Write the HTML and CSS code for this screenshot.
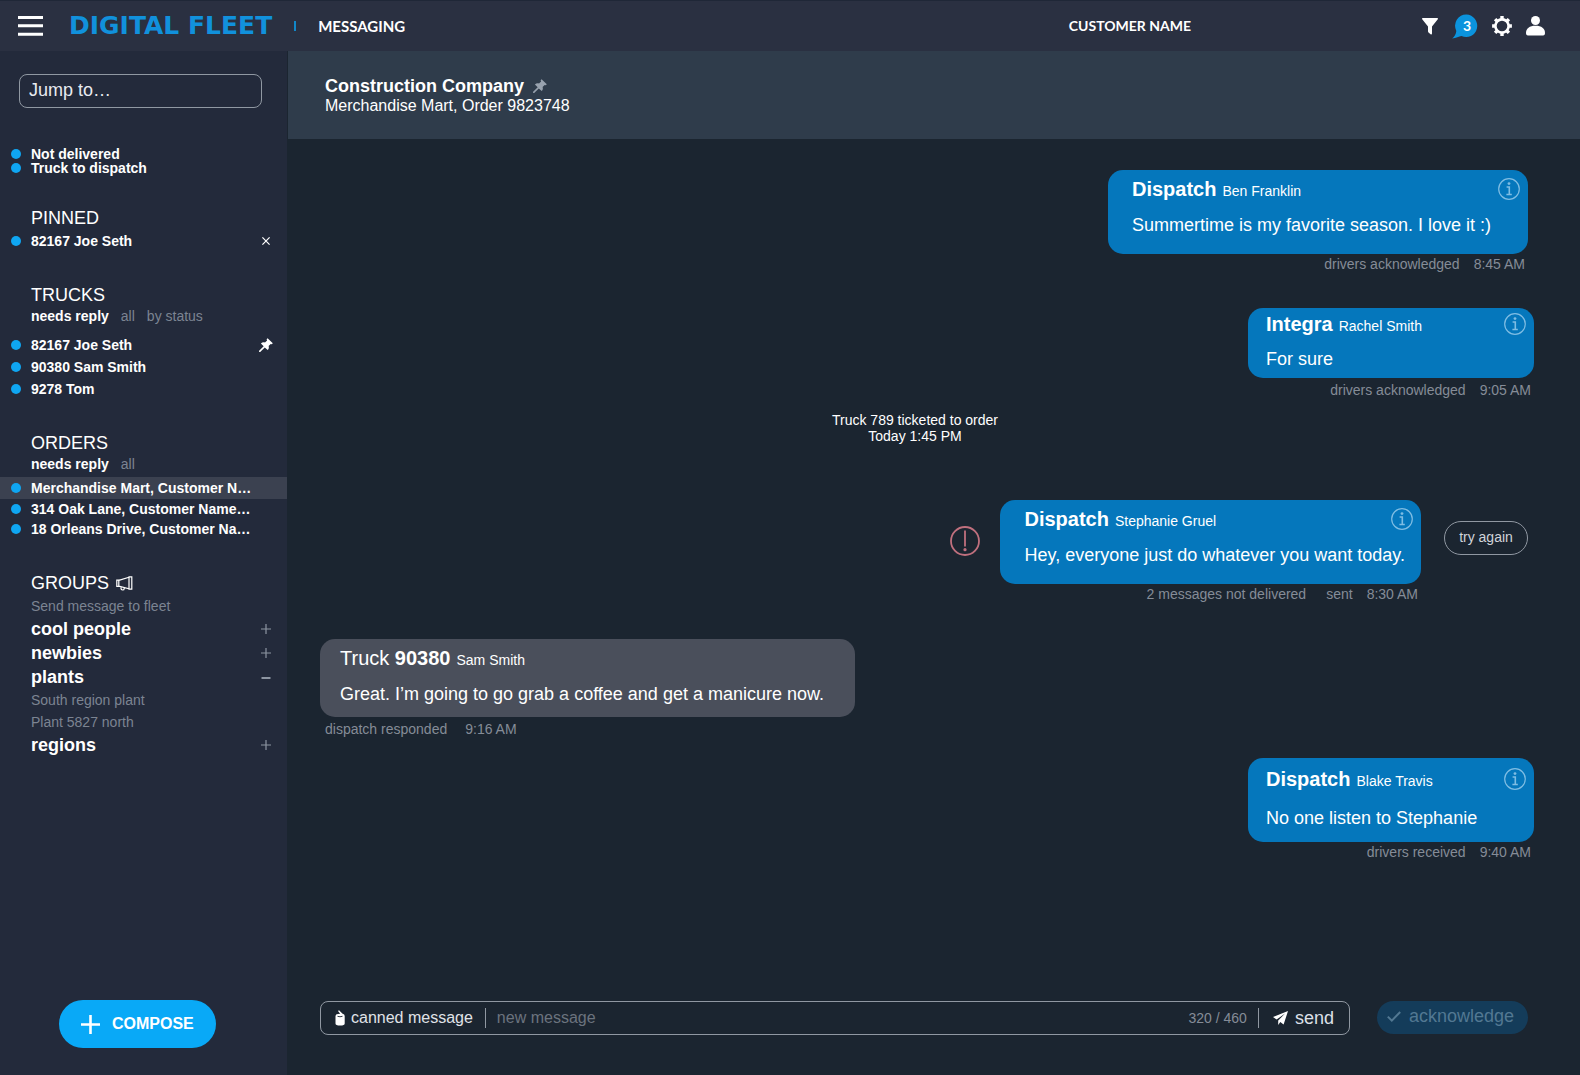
FILE: index.html
```html
<!DOCTYPE html>
<html lang="en">
  <head>
    <meta charset="UTF-8" />
    <meta name="viewport" content="width=device-width, initial-scale=1.0" />
    <title>Digital Fleet - Messaging</title>
    <link rel="stylesheet" href="styles.css">
  </head>
  <body>
    <!-- shared icons -->
    <svg class="sprite" aria-hidden="true">
      <symbol id="pin" viewBox="0 0 14 14">
        <path d="M8.6 0.2 L13.8 5.3 L12.8 6.3 L11.7 5.9 L9.6 8 C10.2 9.5 9.8 11 8.7 12.1 L5.8 9.4 L1.2 13.9 L0.1 13.9 L0.1 12.8 L4.7 8.2 L1.9 5.4 C3.1 4.3 4.6 4 6 4.5 L8.1 2.4 L7.6 1.2 Z" fill="currentColor" />
      </symbol>
      <symbol id="info" viewBox="0 0 22 22">
        <circle cx="11" cy="11" r="10.3" fill="none" stroke="currentColor" stroke-width="1.2" />
        <circle cx="11" cy="5.6" r="1.4" fill="currentColor" />
        <path d="M8.6 9 H11.3 V16.2 M8.4 16.5 H13.8" fill="none" stroke="currentColor" stroke-width="1.6" />
      </symbol>
      <symbol id="plus" viewBox="0 0 10 10">
        <path d="M5 0 V10 M0 5 H10" stroke="currentColor" stroke-width="1.2" />
      </symbol>
    </svg>

    <header class="topbar">
      <button class="icon-btn menu" aria-label="Menu">
        <svg width="25" height="20" viewBox="0 0 25 20"><path d="M0 1.5 H25 M0 9.8 H25 M0 18.3 H25" stroke="currentColor" stroke-width="3" /></svg>
      </button>
      <a class="logo" href="#">DIGITAL FLEET</a>
      <span class="topbar-divider"></span>
      <h1 class="topbar-title">MESSAGING</h1>
      <span class="customer">CUSTOMER NAME</span>
      <nav class="topbar-icons">
        <button class="icon-btn" aria-label="Filter">
          <svg width="16" height="17" viewBox="0 0 16 17"><path d="M0.8 0 H15.2 C16 0 16.2 0.8 15.8 1.3 L10 8.4 V15.6 C10 16.6 9.2 16.8 8.6 16.3 L6.5 14.4 C6.1 14 6 13.8 6 13.3 V8.4 L0.2 1.3 C-0.2 0.8 0 0 0.8 0 Z" fill="currentColor" /></svg>
        </button>
        <button class="icon-btn chat" aria-label="3 new messages">
          <svg width="26" height="25" viewBox="0 0 26 25"><path d="M14.5 0.5 A11 11.3 0 1 1 9.5 22 C7 22.3 4 24 0.2 24.6 C2.5 22.5 4 20.5 4.3 17 A11 11.3 0 0 1 14.5 0.5 Z" fill="#0b93dd" /></svg>
          <span class="chat-count">3</span>
        </button>
        <button class="icon-btn" aria-label="Settings">
          <svg width="20" height="20" viewBox="0 0 20 20">
            <circle cx="10" cy="10" r="6.6" fill="none" stroke="currentColor" stroke-width="2.6" />
            <path d="M10 0.1 V3 M10 17 V19.9 M0.1 10 H3 M17 10 H19.9 M3.1 3.1 L5 5 M15 15 L16.9 16.9 M3.1 16.9 L5 15 M15 5 L16.9 3.1" stroke="currentColor" stroke-width="3.4" />
          </svg>
        </button>
        <button class="icon-btn" aria-label="Account">
          <svg width="19" height="20" viewBox="0 0 19 20"><circle cx="9.5" cy="4.5" r="4.5" fill="currentColor" /><path d="M0 17 C0 12.5 3.5 9.8 9.5 9.8 C15.5 9.8 19 12.5 19 17 C19 18.5 18.5 19.5 17 19.5 H2 C0.5 19.5 0 18.5 0 17 Z" fill="currentColor" /></svg>
        </button>
      </nav>
    </header>

    <div class="layout">
      <aside class="sidebar">
        <input class="jump" type="text" placeholder="Jump to…" aria-label="Jump to" />

        <ul class="list status-list">
          <li class="item"><span class="dot"></span><a href="#">Not delivered</a></li>
          <li class="item"><span class="dot"></span><a href="#">Truck to dispatch</a></li>
        </ul>

        <section class="section">
          <h2>PINNED</h2>
          <ul class="list">
            <li class="item">
              <span class="dot"></span><a href="#">82167 Joe Seth</a>
              <button class="icon-btn row-btn light" aria-label="Unpin">
                <svg width="8" height="8" viewBox="0 0 8 8"><path d="M0.4 0.4 L7.6 7.6 M7.6 0.4 L0.4 7.6" stroke="currentColor" stroke-width="1.2" /></svg>
              </button>
            </li>
          </ul>
        </section>

        <section class="section trucks">
          <h2>TRUCKS</h2>
          <div class="tabs">
            <button class="active">needs reply</button>
            <button>all</button>
            <button>by status</button>
          </div>
          <ul class="list">
            <li class="item">
              <span class="dot"></span><a href="#">82167 Joe Seth</a>
              <button class="icon-btn row-btn light" aria-label="Pin"><svg width="14" height="14"><use href="#pin" /></svg></button>
            </li>
            <li class="item"><span class="dot"></span><a href="#">90380 Sam Smith</a></li>
            <li class="item"><span class="dot"></span><a href="#">9278 Tom</a></li>
          </ul>
        </section>

        <section class="section orders">
          <h2>ORDERS</h2>
          <div class="tabs">
            <button class="active">needs reply</button>
            <button>all</button>
          </div>
          <ul class="list">
            <li class="item selected"><span class="dot"></span><a href="#">Merchandise Mart, Customer N…</a></li>
            <li class="item"><span class="dot"></span><a href="#">314 Oak Lane, Customer Name…</a></li>
            <li class="item"><span class="dot"></span><a href="#">18 Orleans Drive, Customer Na…</a></li>
          </ul>
        </section>

        <section class="section groups">
          <h2>
            GROUPS
            <svg width="17" height="15" viewBox="0 0 17 15" fill="none" stroke="currentColor" stroke-width="1.2"><path d="M0.8 4.2 H2.8 V10.4 H0.8 Z M2.8 4.4 L13 1.2 V12.8 L2.8 10.2 M13 0.8 H15.8 V13.2 H13 Z M5 10.8 V12.6 Q5 14 6.6 14 Q8.2 14 8.2 12.4 V11.6" /></svg>
          </h2>
          <a class="sub" href="#">Send message to fleet</a>
          <div class="group">
            <a href="#">cool people</a>
            <button class="icon-btn row-btn" aria-label="Expand cool people"><svg width="10" height="10"><use href="#plus" /></svg></button>
          </div>
          <div class="group">
            <a href="#">newbies</a>
            <button class="icon-btn row-btn" aria-label="Expand newbies"><svg width="10" height="10"><use href="#plus" /></svg></button>
          </div>
          <div class="group">
            <a href="#">plants</a>
            <button class="icon-btn row-btn" aria-label="Collapse plants"><svg width="10" height="10" viewBox="0 0 10 10"><path d="M0.5 6 H9.5" stroke="currentColor" stroke-width="2" /></svg></button>
          </div>
          <a class="sub" href="#">South region plant</a>
          <a class="sub" href="#">Plant 5827 north</a>
          <div class="group">
            <a href="#">regions</a>
            <button class="icon-btn row-btn" aria-label="Expand regions"><svg width="10" height="10"><use href="#plus" /></svg></button>
          </div>
        </section>

        <button class="compose">
          <svg width="19" height="19" viewBox="0 0 19 19"><path d="M9.5 0 V19 M0 9.5 H19" stroke="currentColor" stroke-width="2.6" /></svg>
          COMPOSE
        </button>
      </aside>

      <main class="chat-panel">
        <header class="chat-header">
          <h2>Construction Company <svg width="14" height="14"><use href="#pin" /></svg></h2>
          <p>Merchandise Mart, Order 9823748</p>
        </header>

        <div class="thread">
          <article class="message">
            <div class="bubble">
              <div class="bubble-head">
                <strong>Dispatch</strong> <span class="author">Ben Franklin</span>
                <button class="icon-btn info" aria-label="Message info"><svg width="22" height="22"><use href="#info" /></svg></button>
              </div>
              <p>Summertime is my favorite season. I love it :)</p>
            </div>
            <div class="meta"><span>drivers acknowledged</span><time>8:45 AM</time></div>
          </article>

          <article class="message narrow compact">
            <div class="bubble">
              <div class="bubble-head">
                <strong>Integra</strong> <span class="author">Rachel Smith</span>
                <button class="icon-btn info" aria-label="Message info"><svg width="22" height="22"><use href="#info" /></svg></button>
              </div>
              <p>For sure</p>
            </div>
            <div class="meta"><span>drivers acknowledged</span><time>9:05 AM</time></div>
          </article>

          <p class="system">Truck 789 ticketed to order<br />Today 1:45 PM</p>

          <div class="failed">
            <svg class="alert" width="30" height="30" viewBox="0 0 30 30" role="img" aria-label="Not delivered">
              <circle cx="15" cy="15" r="14" fill="none" stroke="currentColor" stroke-width="1.8" />
              <path d="M15 4.5 V20.5" stroke="currentColor" stroke-width="1.8" />
              <circle cx="15" cy="23.7" r="1.6" fill="currentColor" />
            </svg>
            <article class="message">
              <div class="bubble">
                <div class="bubble-head">
                  <strong>Dispatch</strong> <span class="author">Stephanie Gruel</span>
                  <button class="icon-btn info" aria-label="Message info"><svg width="22" height="22"><use href="#info" /></svg></button>
                </div>
                <p>Hey, everyone just do whatever you want today.</p>
              </div>
              <div class="meta"><span class="undelivered">2 messages not delivered</span><span>sent</span><time>8:30 AM</time></div>
            </article>
            <button class="retry">try again</button>
          </div>

          <article class="message incoming">
            <div class="bubble">
              <div class="bubble-head">
                <span>Truck <strong>90380</strong></span> <span class="author">Sam Smith</span>
              </div>
              <p>Great. I’m going to go grab a coffee and get a manicure now.</p>
            </div>
            <div class="meta"><span>dispatch responded</span><time>9:16 AM</time></div>
          </article>

          <article class="message narrow">
            <div class="bubble">
              <div class="bubble-head">
                <strong>Dispatch</strong> <span class="author">Blake Travis</span>
                <button class="icon-btn info" aria-label="Message info"><svg width="22" height="22"><use href="#info" /></svg></button>
              </div>
              <p>No one listen to Stephanie</p>
            </div>
            <div class="meta"><span>drivers received</span><time>9:40 AM</time></div>
          </article>
        </div>

        <form class="composer">
          <div class="composer-box">
            <button type="button" class="canned">
              <svg width="10" height="16" viewBox="0 0 10 16"><path d="M0.5 6 Q0.5 4.2 3 4 L5.2 3.8 L3 1 L4 0.2 L7.6 3.8 Q9.7 4.2 9.7 6 V13.5 Q9.7 15.6 5.1 15.6 Q0.5 15.6 0.5 13.5 Z" fill="currentColor" /><path d="M2.5 6.3 Q5 7.2 7.5 6.3" fill="none" stroke="#1c2530" stroke-width="0.9" /></svg>
              canned message
            </button>
            <input type="text" placeholder="new message" aria-label="New message" />
            <span class="counter">320 / 460</span>
            <button type="button" class="send">
              <svg width="15" height="15" viewBox="0 0 15 15"><path d="M15 0 L0 6 L3.6 8.6 L12 2.6 L5.2 9.6 L5.2 14 L7.3 11 L10.6 13.6 Z" fill="currentColor" /></svg>
              send
            </button>
          </div>
          <button type="button" class="acknowledge" disabled>
            <svg width="14" height="11" viewBox="0 0 14 11"><path d="M0.8 5.6 L4.8 9.6 L13.2 1" fill="none" stroke="currentColor" stroke-width="2" /></svg>
            acknowledge
          </button>
        </form>
      </main>
    </div>
  </body>
</html>
```
FILE: styles.css
```css
* {
  box-sizing: border-box;
}
body {
  display: flex;
  flex-direction: column;
  min-height: 100vh;
  margin: 0;
  font-family: "Liberation Sans", Arial, sans-serif;
  font-size: 14px;
  color: #fff;
  background-color: #1b2530;
}
h1,
h2,
p,
ul {
  margin: 0;
  padding: 0;
}
a {
  color: inherit;
  text-decoration: none;
}
svg {
  flex: none;
}
button,
input {
  margin: 0;
  padding: 0;
  border: none;
  background: none;
  color: inherit;
  font: inherit;
}
button {
  cursor: pointer;
}
.sprite {
  display: none;
}
.icon-btn {
  display: flex;
  align-items: center;
  justify-content: center;
}

/* top bar */
.topbar {
  display: flex;
  align-items: center;
  height: 51px;
  padding: 0 35px 0 18px;
  border-top: 1px solid #1f2737;
  background-color: #2a3041;
  font-family: Lato, sans-serif;
  font-weight: 700;
}
.logo {
  margin-left: 26px;
  font-family: "DejaVu Sans", sans-serif;
  font-size: 25px;
  line-height: 28px;
  color: #1191dc;
  white-space: nowrap;
}
.topbar-divider {
  width: 2px;
  height: 10px;
  margin: 0 22px 0 22px;
  background-color: #1187c8;
}
.topbar-title {
  font-size: 15px;
  line-height: 20px;
}
.customer {
  margin-left: auto;
  margin-right: 231px;
  font-size: 14px;
  line-height: 20px;
}
.topbar-icons {
  display: flex;
  align-items: center;
  gap: 14px;
}
.chat {
  position: relative;
}
.chat-count {
  position: absolute;
  top: 3px;
  left: 11px;
  font-size: 14px;
  line-height: 17px;
}

.layout {
  display: flex;
  flex: 1;
}

/* sidebar */
.sidebar {
  display: flex;
  flex-direction: column;
  flex: none;
  width: 288px;
  padding: 23px 0 27px;
  border-right: 1px solid #1b2530;
  background-color: #232a3b;
}
.jump {
  height: 34px;
  margin: 0 25px 0 19px;
  padding: 0 9px 2px;
  border: 1px solid #9098a2;
  border-radius: 8px;
  font-size: 18px;
}
.jump::placeholder {
  color: #e8ebf0;
  opacity: 1;
}
.list {
  list-style: none;
}
.item {
  display: flex;
  align-items: center;
  gap: 10px;
  height: 22px;
  padding: 0 10px 0 11px;
  font-weight: bold;
  white-space: nowrap;
}
.dot {
  flex: none;
  width: 10px;
  height: 10px;
  border-radius: 50%;
  background-color: #0fa6f2;
}
.status-list {
  margin-top: 39px;
}
.status-list .item {
  height: 14px;
}
.section {
  margin-top: 31px;
}
.section h2 {
  display: flex;
  align-items: center;
  gap: 7px;
  padding-left: 31px;
  font-size: 18px;
  font-weight: normal;
  line-height: 24px;
}
.row-btn {
  width: 22px;
  height: 22px;
  margin-left: auto;
  color: #8d95a2;
}
.row-btn.light {
  color: #fff;
}
.tabs {
  display: flex;
  gap: 12px;
  padding-left: 31px;
  line-height: 18px;
  color: #7c8492;
}
.tabs .active {
  font-weight: bold;
  color: #fff;
}
.trucks .list {
  margin-top: 9px;
}
.orders .list {
  margin-top: 4px;
}
.orders .item {
  height: 20px;
}
.orders .selected {
  height: 22px;
  background-color: #3b4150;
}
.groups {
  margin-top: 32px;
}
.sub {
  display: block;
  padding-left: 31px;
  line-height: 22px;
  color: #7c8492;
}
.group {
  display: flex;
  align-items: center;
  height: 24px;
  padding: 0 10px 0 31px;
  font-size: 18px;
  font-weight: bold;
}
.compose {
  display: flex;
  align-items: center;
  align-self: flex-start;
  gap: 12px;
  height: 48px;
  margin: auto 0 0 59px;
  padding: 0 22px;
  border-radius: 24px;
  background-color: #09a9f7;
  font-size: 16px;
  font-weight: bold;
}

/* conversation */
.chat-panel {
  display: flex;
  flex-direction: column;
  flex: 1;
}
.chat-header {
  height: 88px;
  padding: 25px 37px 0;
  background-color: #2f3c4b;
}
.chat-header h2 {
  display: flex;
  align-items: center;
  gap: 9px;
  font-size: 18px;
  line-height: 20px;
}
.chat-header svg {
  color: #98a2ae;
}
.chat-header p {
  font-size: 16px;
  line-height: 20px;
}
.thread {
  display: flex;
  flex-direction: column;
  flex: 1;
  align-items: flex-end;
  padding: 31px 52px 30px 32px;
}
.message + .message {
  margin-top: 34px;
}
.bubble {
  min-width: 420px;
  min-height: 84px;
  padding: 7px 8px 6px 24px;
  border-radius: 15px;
  background-color: #0577bc;
}
.bubble-head {
  display: flex;
  align-items: baseline;
  gap: 6px;
  font-size: 20px;
  line-height: 24px;
}
.author {
  font-size: 14px;
  line-height: 16px;
}
.info {
  align-self: center;
  margin-left: auto;
  color: #7fbde3;
}
.bubble p {
  margin-top: 12px;
  padding-right: 8px;
  font-size: 18px;
  line-height: 24px;
}
.meta {
  display: flex;
  justify-content: flex-end;
  gap: 14px;
  padding-right: 3px;
  line-height: 20px;
  color: #858c97;
}
.narrow {
  margin-right: -6px;
}
.narrow .bubble {
  min-width: 286px;
  padding-top: 9px;
  padding-left: 18px;
}
.narrow .bubble p {
  margin-top: 15px;
}
.compact .bubble {
  min-height: 70px;
  padding-top: 4px;
}
.compact .bubble p {
  margin-top: 11px;
}
.compact .meta,
.incoming .meta {
  margin-top: 2px;
}
.system {
  align-self: stretch;
  padding: 12px 18px 56px 0;
  line-height: 16px;
  text-align: center;
}
.failed {
  display: flex;
  align-items: flex-start;
}
.alert {
  margin: 26px 20px 0 0;
  color: #c0707e;
}
.undelivered {
  margin-right: 6px;
}
.retry {
  width: 84px;
  height: 34px;
  margin: 21px 0 0 23px;
  padding-bottom: 2px;
  border: 1px solid #9098a2;
  border-radius: 17px;
  color: #d0d4da;
}
.incoming {
  align-self: flex-start;
  margin-top: 35px;
}
.incoming .bubble {
  min-width: 535px;
  min-height: 78px;
  padding-left: 20px;
  background-color: #4a4f5b;
}
.incoming .meta {
  justify-content: flex-start;
  gap: 18px;
  padding-left: 5px;
}
.incoming + .message {
  margin-top: 19px;
}

/* message box */
.composer {
  display: flex;
  gap: 27px;
  padding: 0 52px 40px 32px;
}
.composer-box {
  display: flex;
  align-items: center;
  flex: 1;
  height: 34px;
  padding: 0 15px 0 14px;
  border: 1px solid #9098a2;
  border-radius: 8px;
  font-size: 16px;
}
.canned {
  display: flex;
  align-items: center;
  gap: 6px;
  height: 20px;
  padding-right: 12px;
  border-right: 1px solid #9098a2;
  color: #e0e3e8;
}
.composer-box input {
  flex: 1;
  min-width: 0;
  padding-left: 11px;
}
.composer-box input::placeholder {
  color: #6b737e;
  opacity: 1;
}
.counter {
  font-size: 14px;
  color: #858c97;
}
.send {
  display: flex;
  align-items: center;
  gap: 7px;
  height: 20px;
  margin-left: 11px;
  padding-left: 14px;
  border-left: 1px solid #9098a2;
  font-size: 18px;
  color: #dde0e8;
}
.send svg,
.canned svg {
  color: #fff;
}
.acknowledge {
  display: flex;
  align-items: center;
  gap: 8px;
  height: 33px;
  padding: 0 14px 2px 10px;
  border-radius: 17px;
  background-color: #143c5a;
  font-size: 18px;
  color: #527892;
}
```
